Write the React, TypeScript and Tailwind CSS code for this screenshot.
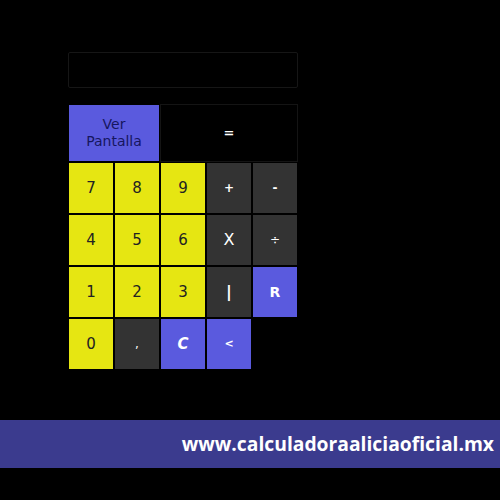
import React from "react";

type Key = { label: string; kind: "num" | "op" | "act"; size?: string };

const rows: Key[][] = [
    [
        { label: "7", kind: "num" },
        { label: "8", kind: "num" },
        { label: "9", kind: "num" },
        { label: "+", kind: "op", size: "text-[12px] font-bold" },
        { label: "-", kind: "op", size: "text-[12px] font-bold" },
    ],
    [
        { label: "4", kind: "num" },
        { label: "5", kind: "num" },
        { label: "6", kind: "num" },
        { label: "X", kind: "op", size: "text-[16px]" },
        { label: "÷", kind: "op", size: "text-[12px]" },
    ],
    [
        { label: "1", kind: "num" },
        { label: "2", kind: "num" },
        { label: "3", kind: "num" },
        { label: "|", kind: "op", size: "text-[16px] font-bold" },
        { label: "R", kind: "act", size: "text-[14px] font-semibold" },
    ],
    [
        { label: "0", kind: "num" },
        { label: ",", kind: "op", size: "text-[12px]" },
        { label: "C", kind: "act", size: "text-[15px] font-bold italic" },
        { label: "<", kind: "act", size: "text-[11px] font-bold" },
    ],
];

const styles = {
    num: "bg-[#e6e612] text-[#222222]",
    op: "bg-[#333333] text-white",
    act: "bg-[#5a5ade] text-white",
};

export default function App() {
    return (
        <div className="h-[500px] w-[500px] bg-black pt-[52px] overflow-hidden" style={{ fontFamily: '"DejaVu Sans", sans-serif' }}>
            <div className="ml-[68px] w-[230px]">
                {/* display */}
                <div className="h-[36px] w-full rounded-[2px] border border-[#161616] bg-black" />

                <div className="mt-[16px] grid grid-cols-[repeat(5,46px)]">
                    <button className="col-span-2 h-[58px] border border-black bg-[#5a5ade] text-[14px] leading-[17px] text-[#16165e]">
                        Ver
                        <br />
                        Pantalla
                    </button>
                    <button className="col-span-3 h-[58px] border border-[#141414] bg-black text-[13px] font-bold text-white">
                        =
                    </button>
                    {rows.map((row, i) =>
                        row.map((k, j) => (
                            <button
                                key={`${i}-${j}`}
                                className={`h-[52px] border border-black ${k.size ?? "text-[15px]"} ${styles[k.kind]}`}
                            >
                                {k.label}
                            </button>
                        ))
                    )}
                </div>
            </div>

            <div className="mt-[50px] flex h-[48px] items-center justify-end bg-[#3b3b8e] pr-[6px]">
                <span className="text-[19.3px] font-bold text-white" style={{ fontFamily: '"Open Sans", sans-serif' }}>
                    www.calculadoraaliciaoficial.mx
                </span>
            </div>
        </div>
    );
}
